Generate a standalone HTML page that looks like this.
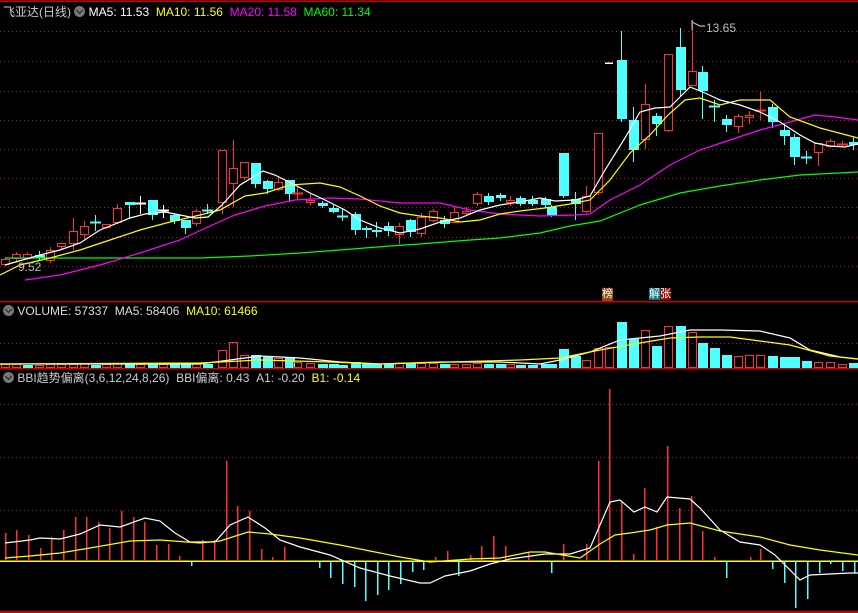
<!DOCTYPE html>
<html><head><meta charset="utf-8"><style>
html,body{margin:0;padding:0;background:#000;width:858px;height:613px;overflow:hidden}
svg{position:absolute;left:0;top:0}
.t{position:absolute;font-family:"Liberation Sans","Noto Sans CJK SC",sans-serif;font-size:12px;white-space:pre;line-height:14px}
.ic{display:inline-block;width:11px;height:11px;border-radius:50%;background:#777;vertical-align:-1px;position:relative}
.ic:after{content:"";position:absolute;left:3px;top:2px;width:4px;height:4px;border-right:1.5px solid #222;border-bottom:1.5px solid #222;transform:rotate(45deg)}
</style></head><body>
<svg id="s" width="858" height="613" xmlns="http://www.w3.org/2000/svg" shape-rendering="crispEdges"></svg>
<div class="t" style="left:3px;top:5px;color:#ccc">飞亚达(日线) <span class="ic"></span> <span style="color:#fff">MA5: 11.53</span>  <span style="color:#ff0">MA10: 11.56</span>  <span style="color:#f0f">MA20: 11.58</span>  <span style="color:#0f0">MA60: 11.34</span></div>
<div class="t" style="left:3px;top:304px;color:#ddd"><span class="ic"></span> VOLUME: 57337  MA5: 58406  <span style="color:#ff0">MA10: 61466</span></div>
<div class="t" style="left:3px;top:371px;color:#ccc"><span class="ic"></span> BBI趋势偏离(3,6,12,24,8,26)  BBI偏离: 0.43  A1: -0.20  <span style="color:#ff0">B1: -0.14</span></div>
<div class="t" style="left:18px;top:260px;color:#bbb">9.52</div>
<div class="t" style="left:706px;top:21px;color:#bbb">13.65</div>
<div class="t" style="left:602px;top:288px;color:#fff;background:#8a4a10;font-size:11px;line-height:13px">榜</div>
<div class="t" style="left:649px;top:288px;color:#fff;font-size:11px;line-height:13px"><span style="background:#0a7a80">解</span><span style="background:#8a1010">张</span></div>
<script>
var s=document.getElementById('s'),h='';
function L(x1,y1,x2,y2,c,w,d){h+='<line x1="'+x1+'" y1="'+y1+'" x2="'+x2+'" y2="'+y2+'" stroke="'+c+'" stroke-width="'+(w||1)+'"'+(d?' stroke-dasharray="1 3"':'')+'/>';}
function P(pts,c){h+='<polyline fill="none" stroke="'+c+'" stroke-width="1.2" shape-rendering="auto" points="'+pts.map(function(p){return p.join(',')}).join(' ')+'"/>';}
L(0,1,858,1,'#c00',1.5);
[31,61,91,120,149,178,207,237,266].forEach(function(y){L(0,y+.5,858,y+.5,'#a02020',1,1)});
L(0,301.5,858,301.5,'#c00',1.5);L(0,368.5,858,368.5,'#c00',1.5);L(0,612,858,612,'#c00',2);
L(0,343.5,858,343.5,'#a02020',1,1);
[404,457,510].forEach(function(y){L(0,y+.5,858,y+.5,'#a02020',1,1)});
var C=[[5,259,264,257,266,'r'],[16,254,258,252,262,'r'],[27,254,258,252,260,'r'],[39,255,258,251,260,'c'],[50,250,260,247,263,'r'],[61,243,246,243,250,'r'],[73,231,243,218,250,'r'],[84,226,234,221,239,'r'],[95,222,222,215,231,'cx'],[106,224,227,224,229,'r'],[117,208,222,204,224,'r'],[129,202,205,202,219,'c'],[140,203,203,196,214,'wx'],[152,200,215,200,220,'c'],[163,210,210,205,218,'wx'],[174,215,221,213,224,'c'],[185,220,228,220,234,'c'],[196,211,223,209,226,'r'],[207,210,210,204,214,'cx'],[222,150,202,150,214,'r'],[233,168,183,140,207,'r'],[244,162,177,162,180,'r'],[255,163,184,163,188,'c'],[267,181,189,180,194,'c'],[278,182,189,177,191,'r'],[289,180,194,180,202,'c'],[297,193,193,187,200,'rx'],[310,200,202,194,205,'r'],[322,203,206,201,208,'c'],[333,208,212,205,213,'c'],[342,216,216,209,221,'cx'],[355,214,230,212,235,'c'],[366,228,230,226,238,'c'],[376,230,232,222,237,'c'],[388,226,231,222,236,'c'],[399,226,234,223,244,'r'],[410,220,232,219,237,'c'],[421,217,233,213,237,'r'],[433,211,220,209,222,'r'],[444,220,224,216,228,'c'],[454,212,222,207,223,'r'],[466,211,213,207,216,'r'],[477,194,203,192,206,'r'],[488,196,202,193,205,'c'],[500,195,198,193,201,'c'],[510,200,202,196,206,'r'],[520,198,204,196,206,'c'],[532,200,204,196,206,'c'],[545,199,205,197,208,'c'],[551,207,215,205,217,'c'],[563,153,196,153,198,'c'],[575,199,204,192,220,'c'],[586,196,211,186,213,'r'],[598,133,192,133,195,'r'],[621,60,119,31,122,'c'],[633,120,150,107,162,'c'],[645,104,139,84,149,'r'],[656,116,124,113,136,'c'],[668,54,130,54,132,'r'],[680,47,90,28,96,'c'],[692,71,85,20,85,'r'],[702,72,91,66,119,'c'],[714,106,106,100,122,'cx'],[726,119,125,115,132,'c'],[738,116,126,114,133,'r'],[749,115,117,111,124,'r'],[760,110,110,92,120,'rx'],[772,107,122,104,128,'c'],[784,130,136,124,145,'c'],[794,137,157,134,165,'c'],[806,157,157,151,164,'cx'],[818,143,152,143,166,'r'],[830,141,146,139,148,'r'],[842,144,144,141,147,'rx'],[853,142,145,137,150,'c']];
C.forEach(function(c){var x=c[0],col=c[5][0]=='r'?'#ff3030':c[5][0]=='c'?'#50ffff':'#fff';
 if(c[5].length>1){L(x+.5,c[3],x+.5,c[4],col);L(x-5,c[1]+.5,x+6,c[1]+.5,col,2);return;}
 L(x+.5,c[3],x+.5,c[1],col);L(x+.5,c[2],x+.5,c[4],col);
 if(col=='#ff3030')h+='<rect x="'+(x-3.5)+'" y="'+(c[1]+.5)+'" width="8" height="'+Math.max(c[2]-c[1],1)+'" fill="#000" stroke="#ff3030"/>';
 else h+='<rect x="'+(x-4)+'" y="'+c[1]+'" width="10" height="'+Math.max(c[2]-c[1],2)+'" fill="'+col+'"/>';});
L(605,63,613,63,'#fff',1.5);
P([[5,258],[80,258],[200,258],[250,256],[300,253],[340,250],[390,246],[420,244],[470,240],[500,238],[540,233],[570,226],[600,221],[640,205],[680,193],[720,186],[760,180],[800,175],[858,172]],'#00ff00');
P([[25,280],[60,275],[100,265],[140,253],[180,240],[210,226],[235,215],[265,206],[295,200],[330,198],[360,199],[400,203],[440,203],[470,210],[500,214],[540,216],[575,215],[590,214],[610,200],[640,185],[670,165],[700,150],[730,140],[760,130],[790,122],[815,115],[835,117],[858,120]],'#ff00ff');
P([[0,275],[20,265],[50,258],[80,250],[110,240],[140,230],[170,222],[200,215],[220,210],[245,196],[265,193],[290,185],[320,183],[340,187],[360,196],[380,206],[400,213],[420,216],[440,218],[460,222],[480,220],[500,214],[520,211],[545,208],[570,204],[590,200],[610,180],[630,153],[650,135],[668,115],[685,100],[700,98],[720,105],[740,100],[770,100],[790,117],[820,128],[858,138]],'#ffff00');
P([[5,265],[40,255],[60,250],[80,243],[100,230],[130,218],[145,214],[165,212],[180,215],[195,218],[208,217],[222,205],[240,185],[263,171],[275,175],[295,185],[310,193],[325,200],[345,210],[360,220],[380,228],[400,233],[420,229],[440,222],[460,218],[480,210],[500,205],[520,202],[540,198],[555,201],[575,200],[590,196],[605,170],[625,138],[640,112],[655,108],[670,107],[690,87],[705,93],[720,100],[740,105],[760,112],[780,122],[800,135],[815,143],[830,146],[845,147],[858,144]],'#ffffff');
L(692,20,692,30,'#bbb');P([[692,22],[700,26],[705,26]],'#bbb');
var V=[[5,364,'r'],[16,364,'r'],[27,365,'c'],[39,365,'r'],[50,364,'r'],[61,364,'r'],[73,364,'r'],[84,363,'r'],[95,365,'c'],[106,364,'r'],[117,363,'r'],[129,364,'c'],[140,364,'r'],[152,363,'c'],[163,364,'r'],[174,364,'c'],[185,364,'c'],[196,363,'r'],[207,364,'c'],[222,350,'r'],[233,342,'r'],[244,355,'r'],[255,355,'c'],[267,357,'c'],[278,358,'r'],[289,357,'c'],[297,362,'r'],[310,363,'r'],[322,364,'c'],[333,364,'c'],[342,365,'c'],[355,362,'c'],[366,364,'c'],[376,364,'c'],[388,364,'c'],[399,363,'r'],[410,363,'c'],[421,363,'r'],[433,363,'r'],[444,364,'c'],[454,364,'r'],[466,364,'r'],[477,363,'r'],[488,364,'c'],[500,364,'c'],[510,364,'r'],[520,365,'c'],[532,365,'c'],[545,364,'c'],[551,364,'c'],[563,349,'c'],[575,356,'c'],[586,360,'r'],[598,348,'r'],[609,347,'r'],[621,322,'c'],[633,339,'c'],[645,330,'r'],[656,346,'c'],[668,326,'r'],[680,326,'c'],[692,332,'r'],[702,343,'c'],[714,348,'c'],[726,355,'c'],[738,356,'r'],[749,355,'r'],[760,355,'r'],[772,356,'c'],[784,357,'c'],[794,357,'c'],[806,361,'c'],[818,362,'r'],[830,362,'r'],[842,364,'r'],[853,363,'c']];
V.forEach(function(v){if(v[2]=='r')h+='<rect x="'+(v[0]-3.5)+'" y="'+(v[1]+.5)+'" width="8" height="'+(367-v[1])+'" fill="none" stroke="#ff3030"/>';else h+='<rect x="'+(v[0]-4)+'" y="'+v[1]+'" width="10" height="'+(368-v[1])+'" fill="#50ffff"/>';});
P([[0,364],[200,364],[230,360],[260,356],[300,358],[340,362],[380,364],[440,362],[500,362],[540,364],[560,360],[590,352],[620,340],[640,338],[660,336],[690,330],[720,330],[760,331],[790,338],[810,350],[840,357],[858,359]],'#fff');
P([[0,364],[200,363],[260,360],[330,362],[380,364],[450,362],[520,360],[560,358],[600,350],[640,343],[670,338],[700,337],[730,337],[760,341],[790,345],[830,356],[858,359]],'#ff0');
L(0,561,858,561,'#ff0',1.5);
var B=[[5,533],[16,530],[28,535],[40,548],[51,537],[63,530],[75,517],[86,517],[98,522],[109,528],[121,511],[133,517],[144,522],[156,545],[168,544],[179,556],[191,566],[202,540],[214,540],[226,461],[237,506],[249,511],[261,549],[272,557],[284,547],[295,562],[319,568],[330,578],[342,584],[354,587],[365,601],[377,595],[388,590],[400,584],[412,572],[423,570],[435,557],[447,551],[458,576],[470,555],[481,546],[493,536],[505,546],[528,552],[551,573],[563,544],[586,544],[598,461],[609,389],[621,501],[633,554],[644,488],[656,527],[667,446],[679,508],[691,496],[702,531],[714,557],[726,578],[750,557],[760,549],[772,569],[784,583],[795,608],[807,599],[819,573],[830,564],[842,571],[854,573]];
B.forEach(function(b){var up=b[1]<561;L(b[0]+.5,561,b[0]+.5,b[1],up?'#ff3030':'#50ffff',1.5);});
P([[5,543],[30,540],[40,538],[60,539],[80,534],[100,525],[120,527],[145,518],[160,521],[175,533],[190,542],[215,542],[230,525],[248,517],[265,528],[280,540],[300,547],[330,555],[360,568],[390,576],[420,583],[430,583],[445,576],[470,571],[490,564],[510,559],[545,554],[570,554],[590,548],[610,502],[620,500],[634,512],[645,507],[657,512],[667,497],[690,499],[700,508],[720,530],[740,542],[760,545],[775,555],[800,580],[810,575],[850,573],[858,573]],'#fff');
P([[5,558],[30,556],[60,553],[90,548],[130,541],[160,540],[200,543],[220,541],[248,532],[270,534],[300,538],[340,545],[370,551],[400,557],[430,562],[470,559],[500,558],[530,552],[545,552],[580,558],[600,544],[615,535],[630,533],[650,530],[667,525],[690,523],[720,531],[760,537],[790,545],[820,550],[858,555]],'#ff0');
s.innerHTML=h;
</script>
</body></html>
